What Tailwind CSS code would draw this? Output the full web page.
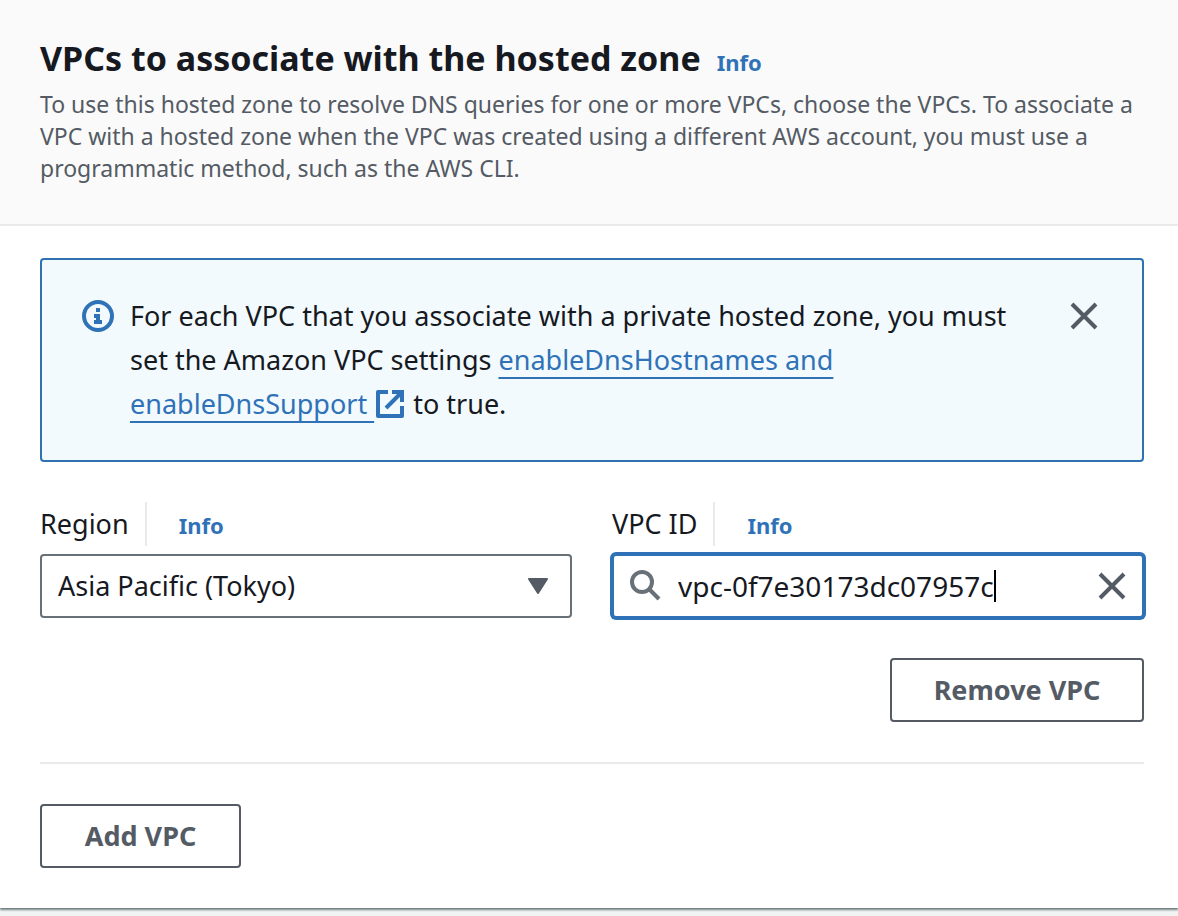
<!DOCTYPE html>
<html lang="en">
<head>
<meta charset="utf-8">
<meta name="viewport" content="width=device-width, initial-scale=1">
<title>VPCs to associate with the hosted zone</title>
<script src="https://cdn.jsdelivr.net/npm/@tailwindcss/browser@4"></script>
</head>
<body class="bg-[#f2f3f3] pb-2 font-['Noto_Sans',sans-serif] text-[27px] leading-[44px] text-[#16191f]">
<section class="bg-white shadow-[0_2px_2px_rgba(0,28,36,0.5),0_0_2px_rgba(0,28,36,0.3)]">
  <header class="border-b-2 border-[#eaeaea] bg-[#fafafa] pt-9 pr-[34px] pb-10 pl-10">
    <div class="flex items-baseline gap-4">
      <h1 class="text-[34px] leading-[44px] font-bold">VPCs to associate with the hosted zone</h1>
      <a href="#" class="text-[22px] leading-8 font-bold text-[#3072b8]">Info</a>
    </div>
    <p class="mt-2 text-[23px] leading-8 text-[#545b64]">To use this hosted zone to resolve DNS queries for one or more VPCs, choose the VPCs. To associate a VPC with a hosted zone when the VPC was created using a different AWS account, you must use a programmatic method, such as the AWS CLI.</p>
  </header>

  <div class="pt-8 pr-[34px] pb-10 pl-10">
    <div role="status" class="flex items-start gap-4 rounded-sm border-2 border-[#3072b0] bg-[#f2fafd] py-[34px] pr-[42px] pl-10">
      <svg class="mt-1.5 size-8 shrink-0" viewBox="0 0 16 16" fill="none" stroke="#3072b8" stroke-width="2" aria-hidden="true">
        <circle cx="8" cy="8" r="7"/>
        <path d="M8 12V8M6 8h3M6 11h4M7 5h2" />
      </svg>
      <p class="flex-1 pr-7">For each VPC that you associate with a private hosted zone, you must set the Amazon VPC settings <a href="#" class="text-[#3072b8]"><span class="underline decoration-2 underline-offset-[7px] [text-decoration-skip-ink:none]">enableDnsHostnames and enableDnsSupport&nbsp;</span><svg class="mr-0.5 ml-0.5 inline-block size-7 align-[-4px]" viewBox="0 0 14 14" fill="none" stroke="currentColor" stroke-width="2" stroke-linejoin="round" aria-hidden="true"><path d="M6 1H1v12h12V8"/><path stroke-linejoin="miter" d="M8 1h5v5M13 1 5 9"/></svg></a> to true.</p>
      <button type="button" aria-label="Dismiss" class="mt-1.5 grid size-8 shrink-0 place-items-center text-[#545b64]">
        <svg class="size-8" viewBox="0 0 16 16" fill="none" stroke="currentColor" stroke-width="2" aria-hidden="true"><path d="m2 2 12 12M14 2 2 14"/></svg>
      </button>
    </div>

    <div class="mt-10 grid grid-cols-2 gap-10">
      <div>
        <div class="flex items-baseline gap-4">
          <label for="region">Region</label>
          <span class="mr-4 w-0.5 self-stretch bg-[#eaeaea]"></span>
          <a href="#" class="text-[22px] leading-8 font-bold text-[#3072b8]">Info</a>
        </div>
        <div class="relative mt-2">
          <select id="region" class="block h-16 w-full appearance-none rounded-sm border-2 border-[#687078] bg-white pr-14 pl-4">
            <option>Asia Pacific (Tokyo)</option>
          </select>
          <svg class="pointer-events-none absolute top-6 right-6 h-4 w-5" viewBox="0 0 20 16" fill="#545b64" stroke="#545b64" stroke-width="2" stroke-linejoin="round" aria-hidden="true"><path d="M1 1h18l-9 14z"/></svg>
        </div>
      </div>
      <div>
        <div class="flex items-baseline gap-4">
          <label for="vpc">VPC ID</label>
          <span class="mr-4 w-0.5 self-stretch bg-[#eaeaea]"></span>
          <a href="#" class="text-[22px] leading-8 font-bold text-[#3072b8]">Info</a>
        </div>
        <div class="mt-2 flex h-16 items-center rounded-sm border-2 border-[#3072b8] bg-white px-4 ring-2 ring-[#3072b8]">
          <svg class="mr-4 size-8 shrink-0" viewBox="0 0 16 16" fill="none" stroke="#687078" stroke-width="2" aria-hidden="true"><circle cx="6" cy="6" r="5"/><path d="m9.5 9.5 5 5"/></svg>
          <input id="vpc" type="text" value="vpc-0f7e30173dc07957c" class="field-sizing-content max-w-full text-[28px] caret-transparent outline-none">
          <span class="h-8 w-0.5 shrink-0 bg-black" aria-hidden="true"></span>
          <button type="button" aria-label="Clear" class="-mr-0.5 ml-auto grid size-8 shrink-0 place-items-center text-[#545b64]">
            <svg class="size-8" viewBox="0 0 16 16" fill="none" stroke="currentColor" stroke-width="2" aria-hidden="true"><path d="m2 2 12 12M14 2 2 14"/></svg>
          </button>
        </div>
      </div>
    </div>

    <div class="mt-10 flex justify-end border-b-2 border-[#eaeaea] pb-10">
      <button type="button" class="h-16 min-w-[254px] rounded-sm border-2 border-[#545b64] bg-white px-10 font-bold text-[#545b64]">Remove VPC</button>
    </div>
    <button type="button" class="mt-10 block h-16 min-w-[201px] rounded-sm border-2 border-[#545b64] bg-white px-10 font-bold text-[#545b64]">Add VPC</button>
  </div>
</section>
</body>
</html>
